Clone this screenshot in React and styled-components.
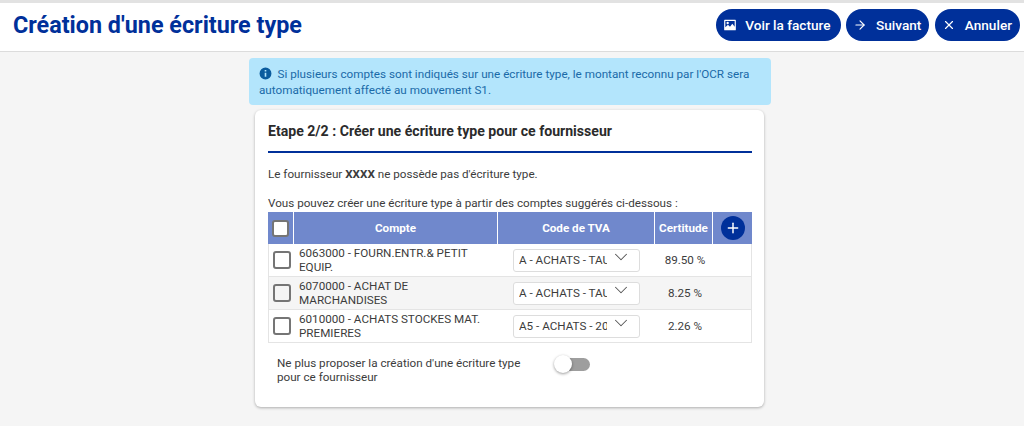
import React from 'react';
import styled, { createGlobalStyle } from 'styled-components';
import { ArrowRight, X, Plus, ChevronDown } from 'lucide-react';

const GlobalStyle = createGlobalStyle`
  html, body {
    margin: 0;
    padding: 0;
    background: #f5f5f5;
    font-family: Roboto, "Liberation Sans", sans-serif;
  }
  * {
    box-sizing: border-box;
  }
`;

const rows = [
  { label: '6063000 - FOURN.ENTR.& PETIT EQUIP.', tva: 'A - ACHATS - TAU', score: '89.50 %' },
  { label: '6070000 - ACHAT DE MARCHANDISES', tva: 'A - ACHATS - TAU', score: '8.25 %' },
  { label: '6010000 - ACHATS STOCKES MAT. PREMIERES', tva: 'A5 - ACHATS - 20', score: '2.26 %' },
];

const GRID = '26px 204px 157px 58px 39px';

function PhotoIcon() {
  return (
    <PhotoSvg width="14" height="14" viewBox="0 0 24 24" fill="currentColor">
      <path fillRule="evenodd" d="M3 3h18a1 1 0 0 1 1 1v16a1 1 0 0 1-1 1H3a1 1 0 0 1-1-1V4a1 1 0 0 1 1-1zm1 2v11l4.500-4.500 3.500 3.500 4-5 4 5V5H4zm4 1.500a2 2 0 1 1 0 4 2 2 0 0 1 0-4z" />
    </PhotoSvg>
  );
}

function InfoIcon() {
  return (
    <svg width="13" height="13" viewBox="0 0 24 24" fill="#0b5c9e">
      <path d="M12 1a11 11 0 1 0 0 22 11 11 0 0 0 0-22zm1.500 17h-3v-7.500h3V18zm0-9.500h-3v-3h3v3z" />
    </svg>
  );
}

function App() {
  return (
    <Page>
      <GlobalStyle />
      <Header>
        <Title>Création d'une écriture type</Title>
        <Actions>
          <ActionButton $endPad={10}><PhotoIcon />Voir la facture</ActionButton>
          <ActionButton><ArrowRight size={14} strokeWidth={2} />Suivant</ActionButton>
          <ActionButton><X size={14} strokeWidth={2} />Annuler</ActionButton>
        </Actions>
      </Header>
      <Main>
        <Banner>
          <BannerIcon><InfoIcon /></BannerIcon>
          Si plusieurs comptes sont indiqués sur une écriture type, le montant reconnu par l'OCR sera automatiquement affecté au mouvement S1.
        </Banner>
        <Card>
          <CardTitle>Etape 2/2 : Créer une écriture type pour ce fournisseur</CardTitle>
          <Paragraph>Le fournisseur <strong>XXXX</strong> ne possède pas d'écriture type.</Paragraph>
          <Intro>Vous pouvez créer une écriture type à partir des comptes suggérés ci-dessous :</Intro>
          <Table>
            <HeadRow>
              <HeadCell><Checkbox $size={17} $fill="#fff" /></HeadCell>
              <HeadCell>Compte</HeadCell>
              <HeadCell>Code de TVA</HeadCell>
              <HeadCell>Certitude</HeadCell>
              <HeadCell><AddButton><Plus size={16} strokeWidth={2.2} /></AddButton></HeadCell>
            </HeadRow>
            {rows.map((row, index) => (
              <Row key={row.label} $alt={index % 2 === 1}>
                <CheckCell><Checkbox /></CheckCell>
                <LabelCell>{row.label}</LabelCell>
                <SelectCell>
                  <SelectBox>
                    <SelectText>{row.tva}</SelectText>
                    <SelectArrow size={22} strokeWidth={1.1} />
                  </SelectBox>
                </SelectCell>
                <ScoreCell>{row.score}</ScoreCell>
                <div />
              </Row>
            ))}
          </Table>
          <OptionRow>
            <OptionText>Ne plus proposer la création d'une écriture type pour ce fournisseur</OptionText>
            <Toggle><Knob /></Toggle>
          </OptionRow>
        </Card>
      </Main>
    </Page>
  );
}

export default App;

const Page = styled.div`
  width: 1024px;
  height: 426px;
  overflow: hidden;
  background: #f5f5f5;
  border-top: 3px solid #e2e2e2;
`;

const Header = styled.header`
  height: 49px;
  background: #fff;
  border-bottom: 1px solid #dcdcdc;
  display: flex;
  align-items: center;
  justify-content: space-between;
  padding: 0 4px 4px 13px;
`;

const Title = styled.h1`
  margin: 0;
  font-size: 23.35px;
  font-weight: 700;
  color: #00309a;
`;

const Actions = styled.div`
  display: flex;
  gap: 5.5px;
`;

const ActionButton = styled.button`
  height: 32px;
  display: flex;
  align-items: center;
  gap: 9px;
  padding: 0 ${(props) => props.$endPad || 8}px 0 7px;
  border: none;
  border-radius: 16px;
  background: #00309a;
  color: #fff;
  font-family: Roboto, sans-serif;
  font-size: 13.6px;
  font-weight: 500;
`;

const PhotoSvg = styled.svg`
  margin-right: -1px;
`;

const Main = styled.main`
  width: 522px;
  margin: 6px 0 0 249px;
`;

const Banner = styled.div`
  height: 47px;
  padding: 9px 10px;
  background: #b3e5fc;
  border-radius: 4px;
  color: #1a6aa8;
  font-size: 11.7px;
  line-height: 14px;
`;

const BannerIcon = styled.span`
  display: inline-block;
  width: 18.500px;
  vertical-align: -2px;
`;

const Card = styled.section`
  width: 509px;
  height: 297px;
  margin: 5px 0 0 6px;
  padding: 13px 12px 13px 13px;
  background: #fff;
  border-radius: 6px;
  box-shadow: 0 1px 3px rgba(0, 0, 0, 0.3);
  color: #3c3c3c;
  font-size: 11.66px;
`;

const CardTitle = styled.h2`
  margin: 0;
  height: 30px;
  border-bottom: 2px solid #00309a;
  font-size: 14.1px;
  font-weight: 700;
  line-height: 16px;
  color: #2b2b2b;
`;

const Paragraph = styled.p`
  margin: 14px 0 0;
  line-height: 14px;
`;

const Intro = styled.p`
  margin: 15px 0 2px;
  line-height: 14px;
`;

const Table = styled.div`
  width: 484px;
`;

const HeadRow = styled.div`
  display: grid;
  grid-template-columns: ${GRID};
  height: 32px;
  background: #7088cc;
`;

const HeadCell = styled.div`
  display: flex;
  align-items: center;
  justify-content: center;
  color: #fff;
  font-size: 11.66px;
  font-weight: 700;
  border-right: 1px solid #fff;
  &:last-child {
    border-right: none;
  }
`;

const AddButton = styled.button`
  width: 24px;
  height: 24px;
  margin-bottom: 1px;
  display: flex;
  align-items: center;
  justify-content: center;
  padding: 0;
  border: none;
  border-radius: 50%;
  background: #00309a;
  color: #fff;
`;

const Row = styled.div`
  display: grid;
  grid-template-columns: ${GRID};
  height: 33px;
  align-items: center;
  background: ${(props) => (props.$alt ? '#f5f5f5' : '#fff')};
  border: 1px solid #e4e4e4;
  border-top: none;
`;

const CheckCell = styled.div`
  display: flex;
  justify-content: center;
`;

const Checkbox = styled.span`
  display: block;
  width: ${(props) => props.$size || 18}px;
  height: ${(props) => props.$size || 18}px;
  border: 2px solid #757575;
  border-radius: 3px;
  background: ${(props) => props.$fill || 'transparent'};
`;

const LabelCell = styled.div`
  padding-left: 4px;
  line-height: 14px;
`;

const SelectCell = styled.div`
  display: flex;
  padding-left: 14px;
`;

const SelectBox = styled.div`
  width: 127px;
  height: 23px;
  display: flex;
  align-items: center;
  padding: 0 7px 0 5px;
  border: 1px solid #ddd;
  border-radius: 3px;
  background: #fff;
`;

const SelectText = styled.span`
  width: 89px;
  overflow: hidden;
  white-space: nowrap;
`;

const SelectArrow = styled(ChevronDown)`
  flex: none;
  margin: 0 0 6px 3px;
  color: #555;
`;

const ScoreCell = styled.div`
  text-align: center;
`;

const OptionRow = styled.div`
  display: flex;
  margin: 13px 0 0 9px;
`;

const OptionText = styled.div`
  width: 260px;
  line-height: 14px;
`;

const Toggle = styled.div`
  position: relative;
  width: 35px;
  height: 13px;
  margin: 2px 0 0 18px;
  border-radius: 6.5px;
  background: #9e9e9e;
`;

const Knob = styled.span`
  position: absolute;
  left: -1px;
  top: -3px;
  width: 18px;
  height: 18px;
  border-radius: 50%;
  background: #fff;
  box-shadow: 0 1px 3px rgba(0, 0, 0, 0.4);
`;
